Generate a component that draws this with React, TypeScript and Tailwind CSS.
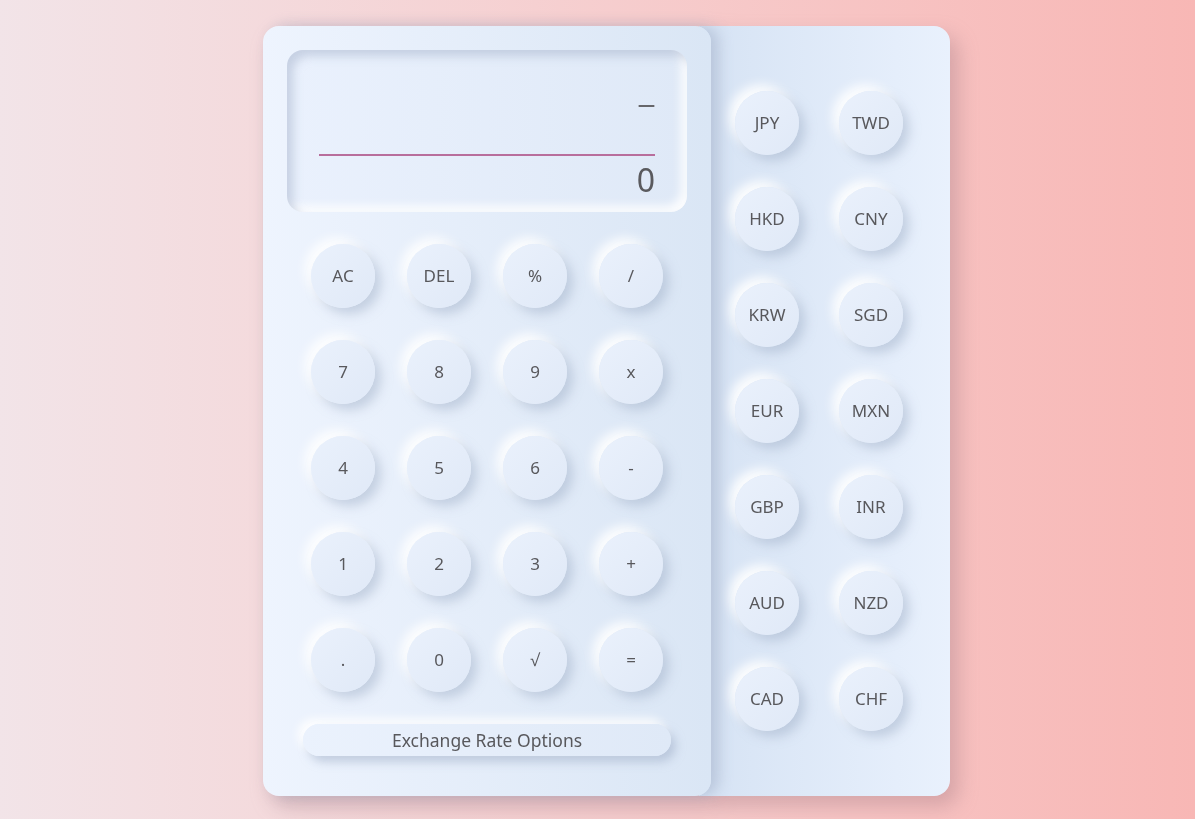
import type { ReactNode } from 'react';

const KEYS = ['AC', 'DEL', '%', '/', '7', '8', '9', 'x', '4', '5', '6', '-', '1', '2', '3', '+', '.', '0', '√', '='];

const CURRENCIES = ['JPY', 'TWD', 'HKD', 'CNY', 'KRW', 'SGD', 'EUR', 'MXN', 'GBP', 'INR', 'AUD', 'NZD', 'CAD', 'CHF'];

const FONT = { fontFamily: '"Noto Sans", "Open Sans", sans-serif' };

/** Round neumorphic key — light glow top-left, soft shadow bottom-right. */
function RoundKey({ label }: { label: string }): ReactNode {
  return (
    <button
      type="button"
      className="flex h-16 w-16 items-center justify-center rounded-full bg-gradient-to-br from-[#eaf1fc] to-[#e0e9f7] text-[17px] text-[#58585c] shadow-[6px_6px_11px_rgba(160,175,200,0.5),-6px_-6px_11px_rgba(255,255,255,0.95)]"
    >
      {label}
    </button>
  );
}

export default function App(): ReactNode {
  return (
    <div
      className="min-h-[819px] w-full bg-gradient-to-r from-[#f2e4e8] to-[#f8b7b5] pl-[263px] pt-[26px]"
      style={FONT}
    >
      <div className="flex w-fit drop-shadow-[8px_10px_10px_rgba(150,110,120,0.35)]">
        {/* calculator body */}
        <div className="relative z-10 flex h-[770px] w-[448px] flex-col rounded-2xl bg-gradient-to-r from-[#eef4fe] to-[#dae6f5] p-6 shadow-[8px_0_14px_rgba(150,165,190,0.45)]">
          <div className="flex h-[162px] flex-col rounded-2xl bg-gradient-to-r from-[#eaf1fd] to-[#dfe9f7] px-8 pt-[34px] shadow-[inset_6px_6px_10px_rgba(170,182,205,0.55),inset_-6px_-6px_10px_rgba(255,255,255,0.9)]">
            <div className="flex h-10 items-center justify-end text-[17px] font-bold leading-none text-[#66666a]">—</div>
            <div className="mt-[30px] h-[2px] bg-[#b86e9c]" />
            <div className="mt-[6px] text-right text-[32px] leading-9 text-[#5a5a5e]">0</div>
          </div>

          <div className="mt-8 grid grid-cols-4 gap-8 px-6">
            {KEYS.map((k) => (
              <RoundKey key={k} label={k} />
            ))}
          </div>

          <button
            type="button"
            className="mx-4 mt-8 h-8 rounded-2xl bg-gradient-to-r from-[#ebf2fd] to-[#dfe9f7] text-[17.5px] text-[#58585c] shadow-[5px_6px_10px_rgba(160,175,200,0.55),-5px_-5px_10px_rgba(255,255,255,0.95)]"
          >
            Exchange Rate Options
          </button>
        </div>

        {/* currency drawer, tucked behind the calculator */}
        <div className="-ml-3 h-[770px] w-[251px] rounded-r-2xl bg-gradient-to-r from-[#d6e3f4] to-[#e9f1fd] pl-9 pt-[65px]">
          <div className="grid w-fit grid-cols-2 gap-x-10 gap-y-8">
            {CURRENCIES.map((c) => (
              <RoundKey key={c} label={c} />
            ))}
          </div>
        </div>
      </div>
    </div>
  );
}
